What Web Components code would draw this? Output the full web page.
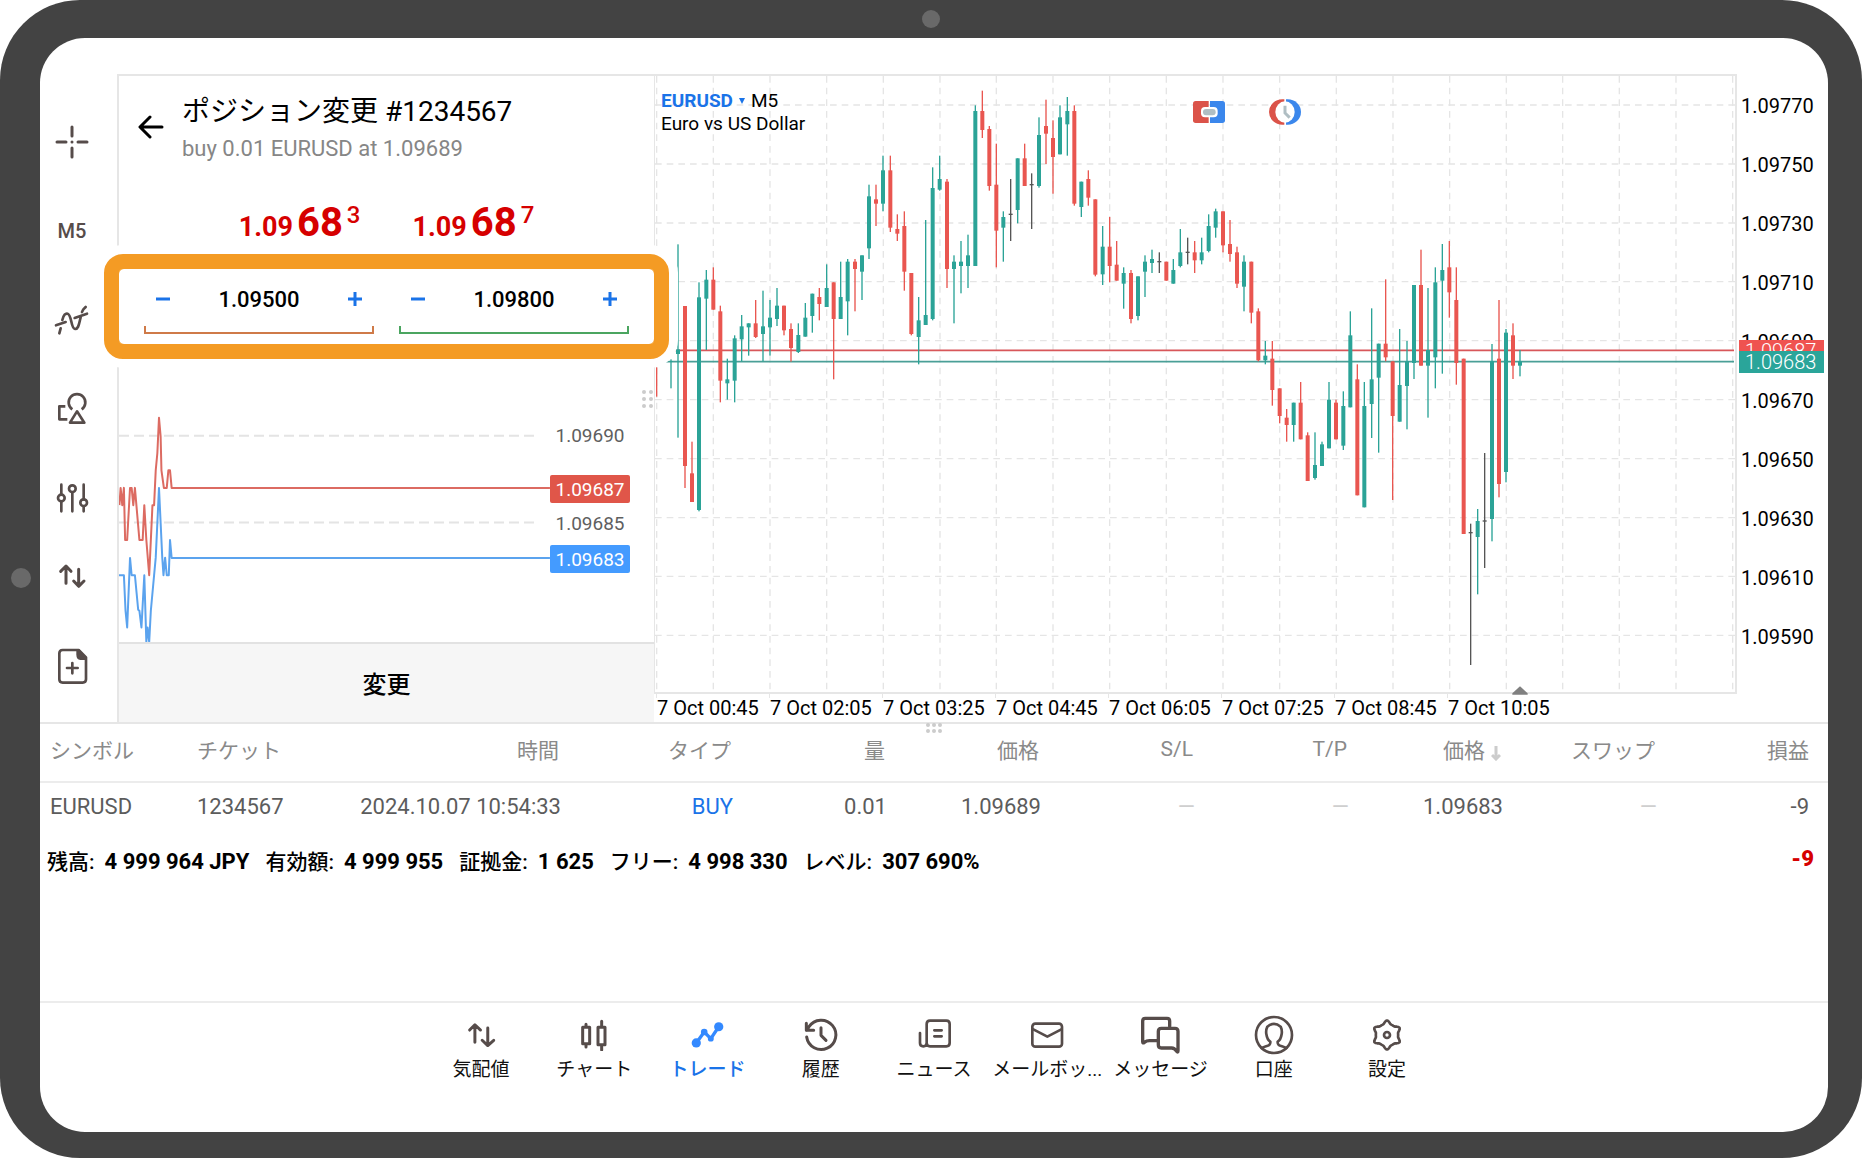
<!DOCTYPE html>
<html lang="ja">
<head>
<meta charset="utf-8">
<meta name="viewport" content="width=device-width, initial-scale=1">
<title>ポジション変更 – EURUSD</title>
<style>
  body {
    margin: 0;
    background: #fff;
    color: #000;
    font-family: Roboto, "Noto Sans CJK JP", sans-serif;
    --line: #e6e6e6;
    --ink: #564c4a;
    --blue: #1a73e8;
    --up: #2ba397;
    --down: #e95650;
  }
</style>
</head>
<body>
<device-frame>
  <trade-workspace>
    <tool-rail slot="rail"></tool-rail>
    <order-panel slot="order">
      <span slot="title">ポジション変更 #1234567</span>
      <span slot="subtitle">buy 0.01 EURUSD at 1.09689</span>
      <big-quote slot="quotes" lead="1.09" pips="68" point="3"></big-quote>
      <big-quote slot="quotes" lead="1.09" pips="68" point="7"></big-quote>
      <price-stepper slot="levels" label="S/L" value="1.09500" tone="#cf7a48"></price-stepper>
      <price-stepper slot="levels" label="T/P" value="1.09800" tone="#4ba560"></price-stepper>
      <tick-chart slot="ticks"></tick-chart>
      <span slot="action">変更</span>
    </order-panel>
    <price-chart slot="chart"></price-chart>
  </trade-workspace>
  <position-table></position-table>
  <account-summary profit="-9">
    <summary-item label="残高:">4 999 964 JPY</summary-item>
    <summary-item label="有効額:">4 999 955</summary-item>
    <summary-item label="証拠金:">1 625</summary-item>
    <summary-item label="フリー:">4 998 330</summary-item>
    <summary-item label="レベル:">307 690%</summary-item>
  </account-summary>
  <bottom-nav></bottom-nav>
</device-frame>

<script>
const define = (name, html, setup) => {
  const tpl = document.createElement('template');
  tpl.innerHTML = `<style>*{box-sizing:border-box}button,input{font:inherit;color:inherit;margin:0;padding:0;border:0;background:none}svg{display:block}</style>${html}`;
  customElements.define(name, class extends HTMLElement {
    constructor() {
      super();
      this.attachShadow({ mode: 'open' }).append(tpl.content.cloneNode(true));
    }
    connectedCallback() { if (setup) setup(this, this.shadowRoot); }
  });
};

/* ---------- icons: [viewBox, width, height, markup] ---------- */
const gear = (() => {
  let d = '';
  for (let a = 0; a < 360; a += 5) {
    const t = a * Math.PI / 180, c = Math.cos(6 * t);
    const r = 37 - 5 * c + 1.5 * Math.cos(12 * t);
    d += `${a ? 'L' : 'M'}${(48 + r * Math.cos(t)).toFixed(1)} ${(48 + r * Math.sin(t)).toFixed(1)}`;
  }
  return d + 'Z';
})();
const ICONS = {
  cross: ['0 0 34 34', 34, 34, '<path d="M17 2v9M17 23v9M2 17h9M23 17h9" stroke-width="3"/><circle cx="17" cy="17" r="1.5" fill="currentColor" stroke="none"/>'],
  indicator: ['28 10 108 96', 36, 32, '<path d="M34 74L63 64M90 52L127 39M44 98L48 83M53 58C57 42 62 37 69 39C82 43 78 84 91 85C102 86 103 68 108 50M112 34L116 26L123 19"/>'],
  objects: ['34 279 96 102', 32, 34, '<path d="M83 331A25 25 0 1 1 111 331M62 322H44V361H68M97 337L76 371H119Z" stroke-linecap="butt"/>'],
  sliders: ['33 546 99 96', 33, 32, '<path d="M49 554V584M49 605V634M82 577V634M116 554V598M116 619V634"/><circle cx="49" cy="594" r="10"/><circle cx="82" cy="566" r="10"/><circle cx="116" cy="608" r="10"/>'],
  arrows: ['34 780 96 96', 32, 32, '<path d="M64 850V800M48 814L64 798L79 814M102 808V858M87 843L102 859L118 843" stroke-width="9"/>'],
  newdoc: ['36 1040 93 108', 31, 36, '<path d="M53 1046H101L123 1068V1134Q123 1144 113 1144H53Q43 1144 43 1134V1056Q43 1046 53 1046Z"/><path d="M94 1044H102L125 1068V1076H106Q94 1074 94 1060Z" fill="currentColor" stroke="none"/><path d="M82 1085V1116M66 1100H98"/>'],
  quotes: ['103 56 100 96', 33, 32, '<path d="M133 126V75M117 89L133 73L150 89M172 83V134M155 120L172 136L190 120" stroke-width="9"/>'],
  candles: ['445 56 96 96', 32, 32, '<path d="M459 81H480V130H459ZM505 81H526V133H505ZM469 72V80M469 131V140M516 63V80M516 134V149" stroke-width="9"/>'],
  trade: ['782 56 100 96', 33, 32, '<path d="M798 128L822 95L842 115L866 79" stroke-width="10"/><g fill="currentColor" stroke="none"><circle cx="798" cy="128" r="14"/><circle cx="866" cy="79" r="14"/><circle cx="822" cy="95" r="10"/><circle cx="842" cy="115" r="9"/></g>'],
  history: ['1118 50 108 108', 36, 36, '<path d="M1129 110A44 44 0 1 0 1136 79L1129 90M1128 69V90H1150M1172 82V105L1187 120" stroke-width="9"/>'],
  news: ['-14 50 108 108', 36, 36, '<path d="M28 61H77Q87 61 87 71V128Q87 138 77 138H28Q18 138 18 128V71Q18 61 28 61ZM-2 98V128Q-2 138 8 138T18 128M41 90H63M41 108H63" stroke-width="8"/>'],
  mail: ['327 50 108 108', 36, 36, '<rect x="337" y="70" width="89" height="69" rx="9"/><path d="M340 87L382 109L424 87"/>'],
  messages: ['661 44 120 120', 40, 40, '<path d="M750 78V62Q750 54 742 54H677Q669 54 669 62V124Q669 130 674 126Q682 120 692 121H710M725 84H766Q775 84 775 93V152Q775 158 770 152Q764 142 754 143H725Q716 143 716 134V93Q716 84 725 84Z" stroke-width="10"/>'],
  account: ['1001 44 120 120', 40, 40, '<circle cx="1061" cy="104" r="54"/><path d="M1024 143C1038 135 1051 139 1050 124C1041 119 1039 108 1038 101Q1036 90 1041 79Q1061 62 1081 79Q1086 90 1084 101C1083 108 1081 119 1072 124C1071 139 1084 135 1098 143"/>'],
  settings: ['0 0 96 96', 32, 32, `<path d="${gear}"/><circle cx="48" cy="48" r="9"/>`]
};
const icon = n => {
  const [vb, w, h, body] = ICONS[n];
  return `<svg viewBox="${vb}" width="${w}" height="${h}" fill="none" stroke="currentColor" stroke-width="8" stroke-linecap="round" stroke-linejoin="round" aria-hidden="true">${body}</svg>`;
};

/* ---------- shell ---------- */
define('device-frame', `
<style>
  :host { display: flex; flex-direction: column; position: relative; min-height: 100vh; padding: 38px 34px 26px 40px; background: #434343; border-radius: 80px; box-sizing: border-box; }
  main { flex: 1; display: flex; flex-direction: column; padding-top: 36px; background: #fff; border-radius: 45px; overflow: hidden; }
  .lens { position: absolute; width: 18px; height: 18px; border-radius: 50%; background: #696969; }
  .top { top: 10px; left: calc(50% - 9px); }
  .side { left: 11px; top: calc(50% - 11px); width: 20px; height: 20px; }
</style>
<i class="lens top"></i><i class="lens side"></i>
<main><slot></slot></main>`);

define('trade-workspace', `
<style>
  :host { display: grid; grid-template-columns: 77px 537px 1fr; height: 650px; border-bottom: 2px solid var(--line); box-sizing: border-box; position: relative; }
  .grip { position: absolute; left: calc(50% - 8px); top: 649px; display: grid; grid-template-columns: repeat(3, 4px); gap: 2px; }
  .grip i { width: 4px; height: 4px; border-radius: 50%; background: #ccc; }
</style>
<slot name="rail"></slot><slot name="order"></slot><slot name="chart"></slot>
<div class="grip"><i></i><i></i><i></i><i></i><i></i><i></i></div>`);

define('tool-rail', `
<style>
  :host { display: flex; flex-direction: column; padding-top: 23px; color: var(--ink); box-sizing: border-box; }
  button { display: flex; align-items: center; justify-content: center; height: 89px; padding-right: 13px; font-size: 20px; font-weight: 500; }
  .short { height: 67px; }
  .last { flex: 1; }
</style>
<button aria-label="十字線">${icon('cross')}</button>
<button>M5</button>
<button aria-label="インディケータ">${icon('indicator')}</button>
<button aria-label="オブジェクト">${icon('objects')}</button>
<button aria-label="チャート設定">${icon('sliders')}</button>
<button class="short" aria-label="気配値">${icon('arrows')}</button>
<button class="last" aria-label="新規注文">${icon('newdoc')}</button>`);

/* ---------- order panel ---------- */
define('order-panel', `
<style>
  :host { display: flex; flex-direction: column; min-height: 0; border: solid var(--line); border-width: 2px 0 0 2px; box-sizing: border-box; position: relative; z-index: 2; }
  header { display: flex; align-items: center; gap: 18px; padding: 18px 0 0 19px; }
  header button { width: 26px; height: 26px; margin-bottom: 8px; }
  .t { font-size: 28px; line-height: 36px; }
  .s { font-size: 22px; line-height: 38px; color: #868686; }
  .q { display: flex; justify-content: center; gap: 52px; padding: 31px 0 7px; }
  .box { display: flex; gap: 25px; height: 105px; margin: 0 -15px; padding: 15px 25px 0; border: 15px solid #f49b24; border-radius: 19px; background: #fff; box-shadow: 0 0 0 9px #fff; position: relative; }
  .box::before { content: ""; position: absolute; inset: -1px; border: 1px solid #f49b24; border-radius: 6px; pointer-events: none; }
  .box ::slotted(*) { flex: 1; }
  .ticks { flex: 1; display: flex; min-height: 0; }
  .act { height: 80px; padding-bottom: 2px; border-top: 2px solid #e2e2e2; background: #f6f6f6; font-size: 24px; font-weight: 500; }
  .grip { position: absolute; right: 1px; top: 314px; display: grid; grid-template-columns: 4px 4px; gap: 3px; }
  .grip i { width: 4px; height: 4px; border-radius: 50%; background: #ccc; }
</style>
<header>
  <button aria-label="戻る"><svg viewBox="0 0 26 26" width="26" height="26" fill="none" stroke="#000" stroke-width="3" stroke-linecap="round" stroke-linejoin="round"><path d="M24 13H3M12 3L2 13L12 23"/></svg></button>
  <div><div class="t"><slot name="title"></slot></div><div class="s"><slot name="subtitle"></slot></div></div>
</header>
<div class="q"><slot name="quotes"></slot></div>
<div class="box"><slot name="levels"></slot></div>
<div class="ticks"><slot name="ticks"></slot></div>
<button class="act"><slot name="action"></slot></button>
<div class="grip"><i></i><i></i><i></i><i></i><i></i><i></i></div>`);

define('big-quote', `
<style>
  :host { display: flex; align-items: baseline; gap: 4px; height: 48px; line-height: 48px; color: #d60000; font-weight: 500; }
  .l { font-size: 27px; font-weight: 700; } .p { font-size: 40px; font-weight: 700; } .x { font-size: 24px; align-self: flex-start; line-height: 32px; }
</style>
<span class="l"></span><span class="p"></span><span class="x"></span>`, (el, r) => {
  r.querySelector('.l').textContent = el.getAttribute('lead');
  r.querySelector('.p').textContent = el.getAttribute('pips');
  r.querySelector('.x').textContent = el.getAttribute('point');
});

define('price-stepper', `
<style>
  :host { display: block; min-width: 0; }
  .row { display: flex; align-items: center; height: 30px; }
  button { flex: none; width: 38px; height: 30px; display: grid; place-items: center; }
  input { flex: 1; min-width: 0; height: 30px; text-align: center; font-size: 22px; font-weight: 500; outline: 0; }
  .rule { height: 8px; margin-top: 12px; border: 2px solid; border-top: 0; }
</style>
<div class="row">
  <button aria-label="減らす"><svg width="14" height="14" stroke="var(--blue)" stroke-width="3"><path d="M0 7H14"/></svg></button>
  <input type="text" inputmode="decimal">
  <button aria-label="増やす"><svg width="14" height="14" stroke="var(--blue)" stroke-width="3"><path d="M0 7H14M7 0V14"/></svg></button>
</div>
<div class="rule"></div>`, (el, r) => {
  const i = r.querySelector('input');
  i.value = el.getAttribute('value');
  i.setAttribute('aria-label', el.getAttribute('label'));
  r.querySelector('.rule').style.borderColor = el.getAttribute('tone');
  const [minus, plus] = r.querySelectorAll('button');
  minus.onclick = () => i.value = (+i.value - 0.00001).toFixed(5);
  plus.onclick = () => i.value = (+i.value + 0.00001).toFixed(5);
});

define('tick-chart', `
<style>
  :host { display: block; position: relative; flex: 1; }
  svg { position: absolute; inset: 0; width: 100%; height: 100%; }
  path { fill: none; stroke-width: 2; vector-effect: non-scaling-stroke; stroke-linejoin: round; }
  span { position: absolute; right: 24px; width: 80px; height: 28px; margin-top: -14px; line-height: 29px; text-align: center; font-size: 19px; color: #5f5f5f; border-radius: 2px; }
  .ask { background: #e05649; color: #fff; } .bid { background: #449bff; color: #fff; }
</style>
<svg viewBox="217 57 1311 852" preserveAspectRatio="none">
  <path stroke="#e4e4e4" stroke-dasharray="10 5" d="M217 288H1242M217 549H1242"/>
  <path stroke="#5ba3ee" d="M217 708H229L233 815L237 865L244 656L248 708H256L260 760L264 812L267 815L272 865L279 708L284 909L287 865L291 909L295 815L303 708L307 655L311 550L315 445L319 550L323 655L326 708L330 655L334 708H339L342 602L346 656H1273"/>
  <path stroke="#dc6b62" d="M218 497L221 445L225 497L229 445L232 602H237L244 445H248L252 497L256 445L267 602H275L279 497L284 602L291 708L299 497H303L307 392L311 340L315 234L319 290L321 392L327 445H334L338 392H342L346 445H1273"/>
</svg>
<span style="top:27%">1.09690</span>
<span style="top:46%" class="ask">1.09687</span>
<span style="top:58%">1.09685</span>
<span style="top:70.5%" class="bid">1.09683</span>`);

/* ---------- candlestick chart ---------- */
/* index, type (u up / d down / n doji), high, low, body top, body bottom */
const CANDLES = `-2 d 922 1010 922 922|0 u 898 985 904 906|1 u 553 1133 868 882|2 d 738 1284 738 1218|3 d 1145 1326 1240 1326|4 u 667 1354 712 1350|5 u 630 870 659 716|6 d 622 749 659 749|7 d 737 1027 754 962|8 u 896 1019 958 970|9 u 826 1027 835 962|10 u 765 904 799 838|11 u 790 887 790 802|12 d 720 834 790 831|13 u 692 904 799 822|14 u 720 887 773 802|15 u 684 798 737 777|16 d 737 826 737 811|17 d 790 905 807 864|18 u 790 879 825 876|19 u 729 830 773 830|20 u 701 818 701 768|21 d 684 781 711 732|22 u 613 741 684 741|23 d 667 958 667 777|24 u 605 777 711 777|25 u 597 826 605 724|26 d 597 754 605 627|27 u 586 720 586 635|28 u 374 597 409 565|29 d 374 498 418 431|30 u 287 454 331 431|31 d 287 516 331 503|32 d 463 543 507 521|33 d 454 692 498 635|34 d 639 826 639 822|35 u 711 913 781 831|36 u 480 795 765 795|37 u 322 781 384 777|38 u 287 392 357 389|39 d 357 684 365 627|40 u 586 790 605 627|41 u 543 700 605 618|42 u 524 684 586 618|43 u 136 618 153 618|44 d 92 234 153 210|45 d 198 392 207 378|46 d 251 622 374 512|47 u 454 605 471 503|48 n 357 543 461 465|49 u 295 490 295 450|50 d 251 378 295 378|51 n 340 507 372 376|52 u 172 383 225 378|53 d 119 312 198 221|54 d 181 401 234 291|55 u 136 283 172 283|56 u 111 287 153 193|57 d 136 437 153 431|58 u 365 471 365 441|59 d 331 437 357 413|60 d 418 649 418 644|61 u 498 675 560 643|62 d 471 667 560 618|63 d 543 662 614 662|64 u 622 746 639 671|65 d 630 790 639 777|66 u 649 781 649 768|67 u 586 711 605 635|68 u 569 639 597 609|69 n 577 639 603 607|70 d 605 662 605 662|71 u 597 671 630 671|72 u 507 622 577 618|73 n 533 613 575 579|74 d 543 639 577 601|75 u 533 613 577 601|76 u 463 577 498 573|77 u 446 533 454 503|78 d 454 577 454 556|79 d 480 605 552 582|80 d 560 684 577 671|81 u 586 754 605 680|82 d 605 790 605 758|83 d 745 904 754 901|84 u 843 913 887 901|85 d 843 1037 896 990|86 d 985 1090 985 1068|87 d 1047 1145 1073 1095|88 u 1028 1145 1028 1095|89 d 966 1138 1028 1138|90 d 1117 1263 1126 1263|91 u 1117 1259 1215 1254|92 u 1145 1218 1153 1218|93 u 966 1165 1019 1165|94 d 1019 1138 1028 1138|95 u 994 1170 1038 1157|96 u 754 1042 826 1042|97 d 913 1306 958 1306|98 u 966 1342 1038 1342|99 u 745 1134 958 1032|100 u 851 1178 851 953|101 d 658 904 851 892|102 d 904 1320 904 1068|103 u 807 1085 975 1085|104 u 843 1108 904 978|105 u 675 957 675 909|106 d 569 917 675 917|107 u 684 1073 870 917|108 u 622 985 667 892|109 u 552 941 630 662|110 d 543 773 622 697|111 d 622 974 720 909|112 d 896 1422 896 1422|113 n 1391 1815 1416 1420|114 u 1347 1603 1383 1431|115 n 1179 1524 1381 1385|116 u 852 1444 904 1377|117 d 720 1312 896 1272|118 u 807 1267 818 1236|119 d 790 957 826 917|120 u 870 949 904 917`;
const COLORS = { u: 'var(--up)', d: 'var(--down)', n: '#555' };
const candleSvg = CANDLES.split('|').map(s => {
  const [i, k, hi, lo, a, b] = s.split(' ');
  const x = Math.round(62.5 + i * 21.233);
  return `<g fill="${COLORS[k]}"><rect x="${x - 2}" y="${hi}" width="4" height="${lo - hi}"/><rect x="${x - 6}" y="${a}" width="12" height="${b - a}"/></g>`;
}).join('');
const range = (n, f) => Array.from({ length: n }, (_, i) => f(i)).join('');
const grid = range(20, i => `M${20 + Math.round(i * 169.9)} 48V1896`) + range(10, i => `M15 ${135 + Math.round(i * 176.8)}H3261`);

define('price-chart', `
<style>
  :host { display: grid; grid-template-columns: 1fr 91px; grid-template-rows: 1fr 28px; min-width: 0; position: relative; }
  .plot { position: relative; min-width: 0; border: 2px solid var(--line); border-left-width: 1px; }
  .plot > svg { position: absolute; inset: 0; width: 100%; height: 100%; overflow: visible; }
  .prices { grid-row: 1 / 3; grid-column: 2; position: relative; font-size: 20px; padding: 2px 0 0 4px; }
  .prices div { height: 59px; line-height: 60px; }
  .prices b { position: absolute; left: 2px; width: 85px; height: 22px; line-height: 23px; padding-left: 6px; color: #fff; font-weight: 300; }
  .times { display: flex; font-size: 20px; line-height: 28px; padding-left: 2px; }
  .times span { flex: 0 0 113px; white-space: nowrap; padding-left: 1px; background: linear-gradient(var(--line), var(--line)) 0 0 / 1px 4px no-repeat; }
  .title { position: absolute; left: 6px; top: 13px; font-size: 19px; line-height: 23px; }
  .title div { display: flex; align-items: center; gap: 6px; }
  .title button { display: flex; align-items: center; gap: 6px; color: var(--blue); font-weight: 700; }
  .tools { position: absolute; left: calc(50% - 2px); top: 23px; display: flex; gap: 44px; }
</style>
<div class="plot">
  <svg viewBox="15 48 3240 1848" preserveAspectRatio="none">
    <path d="${grid}" fill="none" stroke="#e5e5e5" stroke-width="4" stroke-dasharray="20 15"/>
    <path d="M15 871H3252" stroke="#d8575a" stroke-width="5"/>
    <path d="M15 905H3252" stroke="#4a9f97" stroke-width="5"/>
    ${candleSvg}
    <path d="M2587 1904V1900L2610 1879L2633 1900V1904Z" fill="#808080"/>
  </svg>
  <div class="title">
    <div><button>EURUSD <svg width="6" height="6" fill="var(--blue)"><path d="M0 0H6L3 6Z"/></svg></button><span>M5</span></div>
    Euro vs US Dollar
  </div>
  <div class="tools">
    <button aria-label="ワンクリック取引"><svg viewBox="0 0 96 78" width="32" height="26"><path d="M47 6V72H8Q0 72 0 64V14Q0 6 8 6Z" fill="#db5349"/><path d="M51 6V72H88Q96 72 96 64V14Q96 6 88 6Z" fill="#3b87ec"/><rect x="24" y="24" width="50" height="31" rx="12" fill="#fff"/><rect x="30" y="30" width="38" height="19" rx="9" fill="#b0bec3"/></svg></button>
    <button aria-label="取引時間"><svg viewBox="0 0 96 78" width="32" height="26"><path d="M46 1V77H40A40 38 0 0 1 40 1Z" fill="#db5349"/><path d="M51 1V77H56A40 38 0 0 0 56 1Z" fill="#3b87ec"/><ellipse cx="48" cy="39" rx="29" ry="32" fill="#fff"/><path d="M48 20V42L62 56" fill="none" stroke="#b0bec3" stroke-width="9"/></svg></button>
  </div>
</div>
<div class="prices">
  ${[770, 750, 730, 710, 690, 670, 650, 630, 610, 590].map(p => `<div>1.09${p}</div>`).join('')}
  <b style="top:266px;background:#ef5350">1.09687</b>
  <b style="top:277px;background:#2aa59a">1.09683</b>
</div>
<div class="times">${['00:45', '02:05', '03:25', '04:45', '06:05', '07:25', '08:45', '10:05'].map(t => `<span>7 Oct ${t}</span>`).join('')}</div>`);

/* ---------- positions ---------- */
define('position-table', `
<style>
  :host { display: block; }
  table { width: 100%; table-layout: fixed; border-collapse: collapse; }
  th, td { padding: 0 10px 0 0; text-align: right; white-space: nowrap; font-weight: 400; }
  th { height: 58px; padding: 0 12px 8px 0; font-size: 21px; color: #8a8a8a; border-bottom: 2px solid #ececec; }
  td { height: 47px; font-size: 22px; color: #5c5c5c; }
  th:nth-child(-n+2), td:nth-child(-n+2) { text-align: left; padding-left: 10px; }
  th:last-child, td:last-child { padding-right: 19px; }
  .buy { color: var(--blue); } .none { color: #cfcfcf; }
  th svg { display: inline-block; margin-left: 6px; vertical-align: -3px; }
</style>
<table>
  <colgroup><col style="width:147px"><col style="width:150px"><col style="width:234px"><col style="width:172px"><col style="width:154px"><col style="width:154px"><col style="width:154px"><col style="width:154px"><col style="width:154px"><col style="width:154px"><col style="width:161px"></colgroup>
  <thead><tr><th>シンボル</th><th>チケット</th><th>時間</th><th>タイプ</th><th>量</th><th>価格</th><th>S/L</th><th>T/P</th><th>価格<svg width="10" height="16" viewBox="0 0 10 16" fill="none" stroke="#ccc" stroke-width="3"><path d="M5 1V14M1 10L5 14L9 10"/></svg></th><th>スワップ</th><th>損益</th></tr></thead>
  <tbody><tr><td>EURUSD</td><td>1234567</td><td>2024.10.07 10:54:33</td><td class="buy">BUY</td><td>0.01</td><td>1.09689</td><td class="none">—</td><td class="none">—</td><td>1.09683</td><td class="none">—</td><td>-9</td></tr></tbody>
</table>`);

define('account-summary', `
<style>
  :host { display: flex; align-items: center; gap: 16px; height: 62px; padding: 0 14px 0 7px; font-weight: 700; box-sizing: border-box; }
  strong { margin-left: auto; font-size: 22px; color: #d60000; padding-bottom: 4px; }
</style>
<slot></slot><strong></strong>`, (el, r) => { r.querySelector('strong').textContent = el.getAttribute('profit'); });

define('summary-item', `
<style>
  :host { display: flex; align-items: baseline; gap: 10px; font-size: 22px; white-space: nowrap; }
  span { font-size: 21px; font-weight: 500; }
</style>
<span></span><slot></slot>`, (el, r) => { r.querySelector('span').textContent = el.getAttribute('label'); });

/* ---------- navigation ---------- */
define('nav-item', `
<style>
  :host { display: block; flex: 1; min-width: 0; }
  a { display: flex; flex-direction: column; align-items: center; color: #111; text-decoration: none; }
  .i { display: grid; place-items: center; height: 40px; color: var(--ink); }
  .l { font-size: 19px; line-height: 30px; white-space: nowrap; }
  :host([active]) .i { color: #3389ff; } :host([active]) .l { color: var(--blue); font-weight: 500; }
</style>
<a href="#"><span class="i"></span><span class="l"><slot></slot></span></a>`, (el, r) => { r.querySelector('.i').innerHTML = icon(el.getAttribute('icon')); });

define('bottom-nav', `
<style>
  :host { display: block; margin-top: auto; border-top: 2px solid #ececec; }
  nav { display: flex; width: 57%; height: 129px; margin: 0 auto; padding-top: 12px; }
</style>
<nav>
  <nav-item icon="quotes">気配値</nav-item>
  <nav-item icon="candles">チャート</nav-item>
  <nav-item icon="trade" active>トレード</nav-item>
  <nav-item icon="history">履歴</nav-item>
  <nav-item icon="news">ニュース</nav-item>
  <nav-item icon="mail">メールボッ...</nav-item>
  <nav-item icon="messages">メッセージ</nav-item>
  <nav-item icon="account">口座</nav-item>
  <nav-item icon="settings">設定</nav-item>
</nav>`);
</script>
</body>
</html>
